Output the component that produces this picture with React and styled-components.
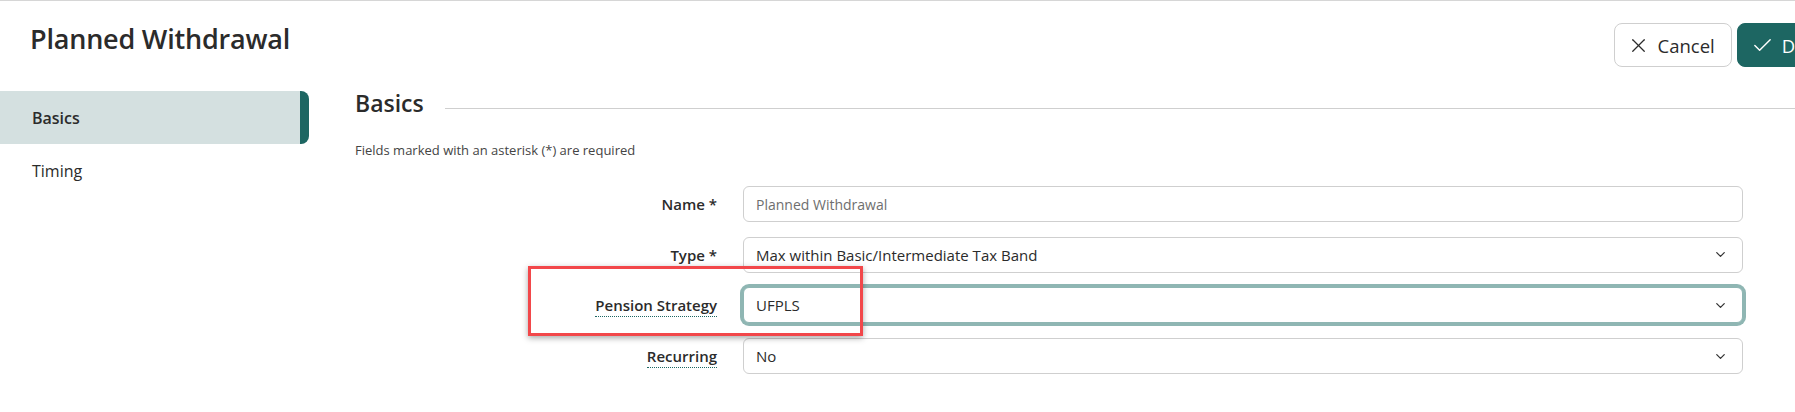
import styled, { createGlobalStyle } from "styled-components";
import { X, Check, ChevronDown } from "lucide-react";

const GlobalStyle = createGlobalStyle`
  html, body {
    margin: 0;
    padding: 0;
    background: #fff;
    overflow: hidden;
  }
  body {
    font-family: "Open Sans", "Noto Sans", sans-serif;
    color: #2b2b2b;
  }
`;

const Page = styled.div`
  position: relative;
  border-top: 1px solid #d6d6d6;
  height: 411px;
`;

const Header = styled.header`
  display: flex;
  align-items: flex-start;
  justify-content: space-between;
  padding: 19px 0 0 30px;
  height: 68px;
  box-sizing: border-box;
`;

const Title = styled.h1`
  margin: 0;
  font-size: 27px;
  font-weight: 600;
  color: #2b2b2b;
  letter-spacing: -0.2px;
`;

const Actions = styled.div`
  display: flex;
  gap: 5px;
  margin: 3px -50px 0 0;
`;

const ActionButton = styled.button`
  display: flex;
  align-items: center;
  gap: 8px;
  height: 44px;
  padding: ${(p) => (p.$primary ? "0 16px 0 13px" : "0 16px 0 12px")};
  border-radius: 8px;
  font-family: inherit;
  font-size: 18.5px;
  border: 1px solid ${(p) => (p.$primary ? "#1d6662" : "#cfcfcf")};
  background: ${(p) => (p.$primary ? "#1d6662" : "#fff")};
  color: ${(p) => (p.$primary ? "#fff" : "#2b2b2b")};
  cursor: pointer;
`;

const Body = styled.div`
  display: grid;
  grid-template-columns: 309px 1fr;
  padding-top: 22px;
`;

const Nav = styled.nav`
  display: flex;
  flex-direction: column;
`;

const NavItem = styled.div`
  height: 53px;
  display: flex;
  align-items: center;
  padding-left: 32px;
  font-size: 16px;
  font-weight: ${(p) => (p.$active ? 600 : 400)};
  color: #2b2b2b;
  background: ${(p) => (p.$active ? "#d4e0e0" : "transparent")};
  border-right: 9px solid ${(p) => (p.$active ? "#1d6662" : "transparent")};
  border-radius: 0 8px 8px 0;
`;

const Main = styled.main`
  padding-left: 46px;
`;

const SectionHead = styled.div`
  display: flex;
  align-items: center;
  gap: 21px;
  margin-top: -4px;
`;

const SectionTitle = styled.h2`
  margin: 0;
  font-size: 23px;
  font-weight: 600;
  color: #2b2b2b;
`;

const Rule = styled.div`
  flex: 1;
  height: 1px;
  background: #cfcfcf;
  margin-top: 11px;
`;

const Hint = styled.p`
  margin: 22px 0 0;
  font-size: 13px;
  color: #444;
`;

const Form = styled.div`
  display: grid;
  grid-template-columns: 362px 1000px;
  column-gap: 26px;
  row-gap: 14.7px;
  margin-top: 27px;
  align-items: center;
`;

const Label = styled.label`
  justify-self: end;
  font-size: 15px;
  font-weight: 600;
  color: #2b2b2b;
`;

const HelpText = styled.span`
  border-bottom: 1px dotted #1d6662;
  padding-bottom: 1px;
`;

const Field = styled.div`
  height: 36px;
  box-sizing: border-box;
  display: flex;
  align-items: center;
  justify-content: space-between;
  padding: 0 14px 0 12px;
  border: 1px solid #cfcfcf;
  border-radius: 6px;
  font-size: ${(p) => (p.$muted ? "14px" : "15px")};
  color: ${(p) => (p.$muted ? "#6e6e6e" : "#2b2b2b")};
  background: #fff;
  box-shadow: ${(p) => (p.$focused ? "0 0 0 3px #8fb6b3" : "none")};
  ${(p) => p.$focused && "border-color: #8fb6b3;"}

  svg {
    color: #333;
  }
`;

const Callout = styled.div`
  position: absolute;
  left: 528px;
  top: 265px;
  width: 335px;
  height: 70px;
  box-sizing: border-box;
  border: 3px solid #f2474a;
  box-shadow: 0 2px 6px rgba(0, 0, 0, 0.35);
  pointer-events: none;
`;

const fields = [
  { label: "Name *", value: "Planned Withdrawal", muted: true },
  { label: "Type *", value: "Max within Basic/Intermediate Tax Band", select: true },
  { label: "Pension Strategy", value: "UFPLS", select: true, help: true, focused: true },
  { label: "Recurring", value: "No", select: true, help: true },
];

export default function App() {
  return (
    <>
      <GlobalStyle />
      <Page>
        <Header>
          <Title>Planned Withdrawal</Title>
          <Actions>
            <ActionButton>
              <X size={23} strokeWidth={1.3} />
              Cancel
            </ActionButton>
            <ActionButton $primary>
              <Check size={23} strokeWidth={1.5} />
              Done
            </ActionButton>
          </Actions>
        </Header>

        <Body>
          <Nav>
            <NavItem $active>Basics</NavItem>
            <NavItem>Timing</NavItem>
          </Nav>

          <Main>
            <SectionHead>
              <SectionTitle>Basics</SectionTitle>
              <Rule />
            </SectionHead>
            <Hint>Fields marked with an asterisk (*) are required</Hint>

            <Form>
              {fields.map((f) => (
                <>
                  <Label key={f.label + "-l"}>
                    {f.help ? <HelpText>{f.label}</HelpText> : f.label}
                  </Label>
                  <Field key={f.label + "-f"} $muted={f.muted} $focused={f.focused}>
                    <span>{f.value}</span>
                    {f.select && <ChevronDown size={15} strokeWidth={2} />}
                  </Field>
                </>
              ))}
            </Form>
          </Main>
        </Body>

        <Callout />
      </Page>
    </>
  );
}
